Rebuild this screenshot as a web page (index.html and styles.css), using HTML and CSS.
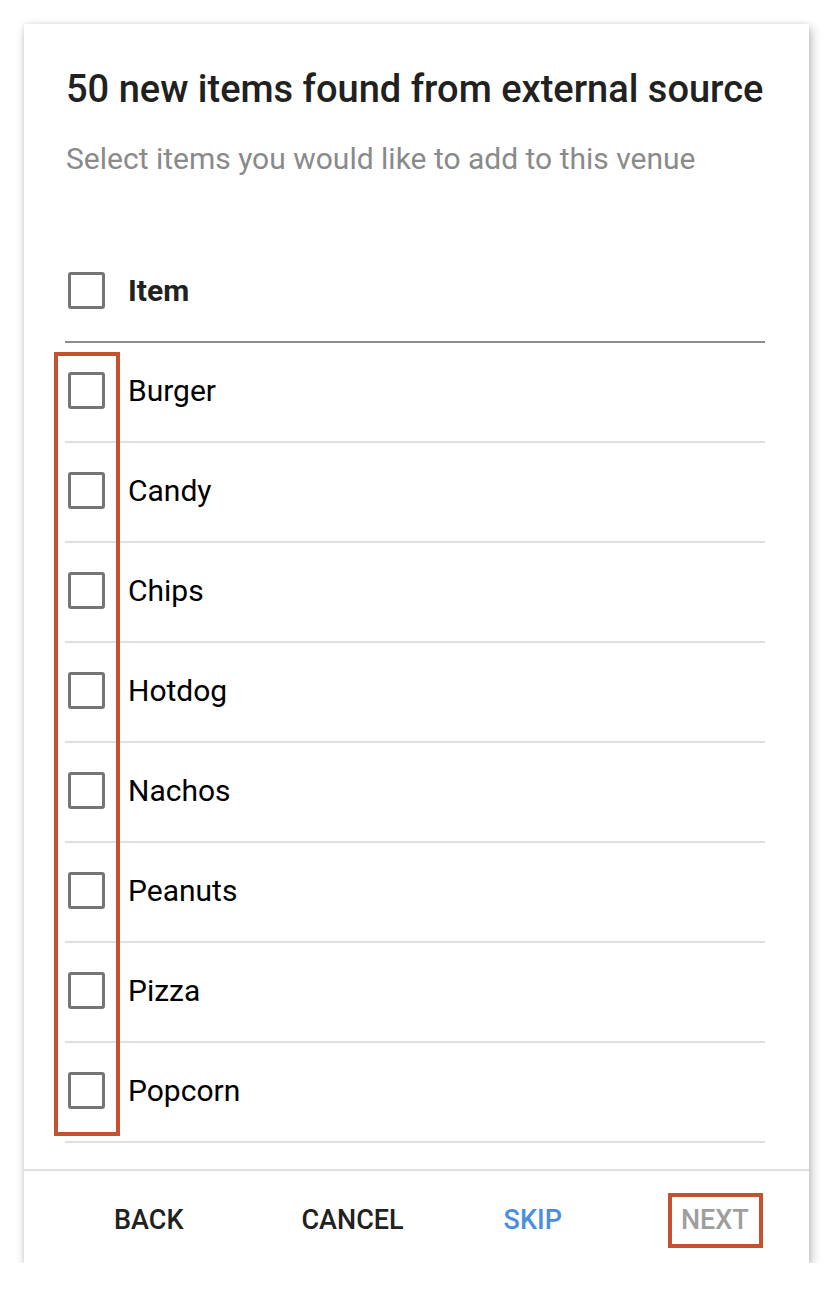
FILE: index.html
```html
<!DOCTYPE html>
<html lang="en">
<head>
<meta charset="utf-8">
<title>New items</title>
<link rel="stylesheet" href="styles.css">
</head>
<body>
<div class="card">
  <div class="body">
    <h1 class="title">50 new items found from external source</h1>
    <p class="subtitle">Select items you would like to add to this venue</p>
    <div class="table">
      <div class="row head">
        <span class="check"></span>
        <span class="label">Item</span>
      </div>
      <div class="row"><span class="check"></span><span class="label">Burger</span></div>
      <div class="row"><span class="check"></span><span class="label">Candy</span></div>
      <div class="row"><span class="check"></span><span class="label">Chips</span></div>
      <div class="row"><span class="check"></span><span class="label">Hotdog</span></div>
      <div class="row"><span class="check"></span><span class="label">Nachos</span></div>
      <div class="row"><span class="check"></span><span class="label">Peanuts</span></div>
      <div class="row"><span class="check"></span><span class="label">Pizza</span></div>
      <div class="row"><span class="check"></span><span class="label">Popcorn</span></div>
    </div>
  </div>
  <div class="footer">
    <button class="btn btn-back">BACK</button>
    <button class="btn btn-cancel">CANCEL</button>
    <button class="btn btn-skip">SKIP</button>
    <button class="btn btn-next">NEXT</button>
  </div>
  <div class="highlight"></div>
</div>
</body>
</html>
```

FILE: styles.css
```css
html, body {
  margin: 0;
  padding: 0;
  background: #ffffff;
}

body {
  font-family: Roboto, "Liberation Sans", Arial, sans-serif;
  padding: 24px 0 0 24px;
}

.card {
  position: relative;
  width: 785px;
  height: 1239px;
  background: #ffffff;
  box-shadow: 2px 4px 10px rgba(0, 0, 0, 0.28), 0 0 4px rgba(0, 0, 0, 0.08);
  display: flex;
  flex-direction: column;
  box-sizing: border-box;
}

.body {
  flex: 1;
  padding: 43px 44px 0 41px;
}

.title {
  margin: 0 0 0 1px;
  font-size: 38px;
  line-height: 44px;
  font-weight: 500;
  color: #212121;
}

.subtitle {
  margin: 30px 0 0 1px;
  font-size: 30px;
  line-height: 36px;
  font-weight: 400;
  color: #8a8a8a;
}

.table {
  margin-top: 66px;
}

.row {
  display: flex;
  align-items: center;
  height: 98px;
  box-sizing: content-box;
  border-bottom: 2px solid #e0e0e0;
  padding-left: 3px;
}

.row > * {
  margin-bottom: 3px;
}

.row.head {
  border-bottom-color: #8c8c8c;
}

.check {
  width: 37px;
  height: 37px;
  box-sizing: border-box;
  border: 3px solid #757575;
  border-radius: 3px;
  flex: none;
}

.label {
  margin-left: 23px;
  font-size: 30px;
  color: #000000;
}

.head .label {
  font-weight: 700;
  color: #212121;
}

.footer {
  height: 94px;
  border-top: 2px solid #e0e0e0;
  display: flex;
  align-items: center;
  padding: 6px 0 0 77px;
  box-sizing: border-box;
}

.btn {
  font-family: Roboto, "Liberation Sans", Arial, sans-serif;
  font-size: 27px;
  font-weight: 500;
  background: none;
  border: 4px solid transparent;
  padding: 9px 10px 9px 9px;
  line-height: 29px;
  color: #212121;
  cursor: pointer;
}

.btn-cancel { margin-left: 91px; }
.btn-skip { margin-left: 73px; color: #4a8ee0; }
.btn-next {
  margin-left: 92px;
  color: #9e9e9e;
  border-color: #c4522f;
}

.highlight {
  position: absolute;
  left: 30px;
  top: 328px;
  width: 66px;
  height: 784px;
  box-sizing: border-box;
  border: 4px solid #c4522f;
  pointer-events: none;
}
```
